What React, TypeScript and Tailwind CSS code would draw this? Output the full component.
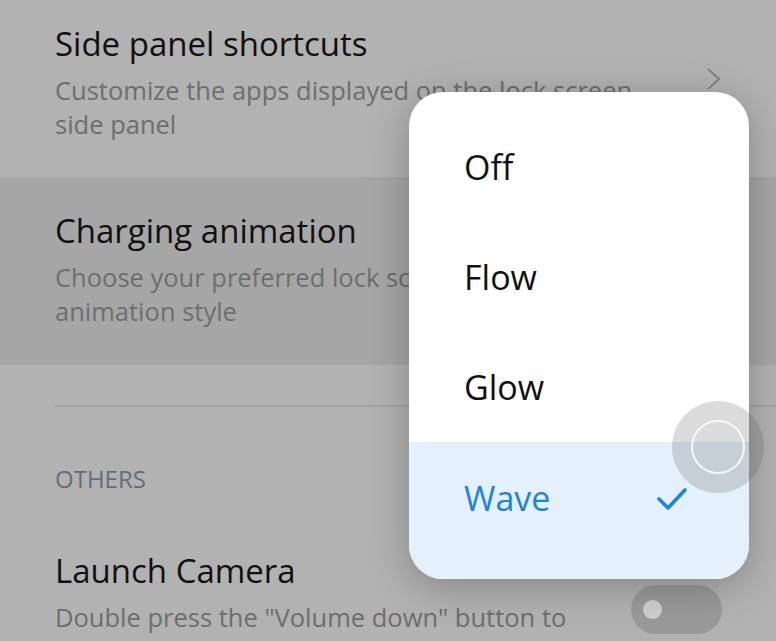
import React from 'react';

const OPTIONS = ['Off', 'Flow', 'Glow', 'Wave'];
const SELECTED = 'Wave';

function SettingRow({ title, lines, highlight, chevron }: { title: string; lines: string[]; highlight?: boolean; chevron?: boolean }) {
  return (
    <div className={`flex items-center pl-[55px] pr-[54px] ${highlight ? 'bg-[#a6a6a6] pt-[34px] pb-[37px]' : 'pt-[24px] pb-[36px]'}`}>
      <div className="flex-1 min-w-0">
        <div className="text-[33px] leading-[40px] text-[#111]">{title}</div>
        <div className="mt-[9px] text-[25.5px] leading-[34px] text-[#6e6e6e]">
          {lines.map(l => <div key={l} className="whitespace-nowrap">{l}</div>)}
        </div>
      </div>
      {chevron && (
        <svg width="17" height="24" viewBox="0 0 17 24" className="mb-[8px] shrink-0">
          <path d="M3 2 L14 12 L3 22" fill="none" stroke="#757575" strokeWidth="1.6" />
        </svg>
      )}
    </div>
  );
}

export default function App() {
  return (
    <div className="relative w-[776px] h-[641px] overflow-hidden bg-[#b2b2b2]" style={{ fontFamily: '"Open Sans", Roboto, sans-serif' }}>
      <SettingRow
        title="Side panel shortcuts"
        lines={['Customize the apps displayed on the lock screen', 'side panel']}
        chevron
      />
      <SettingRow
        title="Charging animation"
        lines={['Choose your preferred lock screen charging', 'animation style']}
        highlight
      />

      <div className="ml-[55px] mt-[40px] h-[2px] bg-[#a3a3a3]" />

      <div className="pl-[55px] mt-[57px] text-[24px] leading-[30px] text-[#676c79]">OTHERS</div>

      <div className="flex pl-[55px] pr-[54px] mt-[57px]">
        <div className="flex-1 min-w-0">
          <div className="text-[33px] leading-[40px] text-[#111]">Launch Camera</div>
          <div className="mt-[9px] text-[25.5px] leading-[34px] text-[#6e6e6e]">
            <div className="whitespace-nowrap">Double press the "Volume down" button to</div>
            <div className="whitespace-nowrap">open Camera when the screen is locked</div>
          </div>
        </div>
        <div className="mt-[34px] w-[91px] h-[49px] shrink-0 rounded-full bg-[#9a9a9a] flex items-center pl-[12px]">
          <div className="w-[19px] h-[19px] rounded-full bg-[#cfcfcf]" />
        </div>
      </div>

      {/* dropdown popup */}
      <div className="absolute left-[409px] top-[92px] w-[340px] h-[487px] rounded-[34px] bg-white overflow-hidden shadow-[0_8px_40px_rgba(0,0,0,0.25)] pt-[20px] flex flex-col">
        {OPTIONS.map(o => {
          const sel = o === SELECTED;
          return (
            <div
              key={o}
              className={`flex items-center pl-[55px] pr-[62px] ${sel ? 'flex-1 bg-[#e4f0fc] items-start pt-[36px]' : 'h-[110px]'}`}
            >
              <div className={`flex-1 text-[34px] leading-[40px] ${sel ? 'text-[#1a84e0]' : 'text-[#111]'}`}>{o}</div>
              {sel && (
                <svg width="30" height="24" viewBox="0 0 30 24" className="mt-[9px]">
                  <path d="M2 12 L11 21 L28 3" fill="none" stroke="#1a84e0" strokeWidth="3.6" strokeLinecap="round" strokeLinejoin="round" />
                </svg>
              )}
            </div>
          );
        })}
      </div>

      {/* touch indicator */}
      <div className="absolute left-[672px] top-[401px] w-[92px] h-[92px] rounded-full bg-[rgba(90,90,90,0.22)] flex items-center justify-center">
        <div className="w-[54px] h-[54px] rounded-full border-2 border-[rgba(255,255,255,0.85)]" />
      </div>
    </div>
  );
}
